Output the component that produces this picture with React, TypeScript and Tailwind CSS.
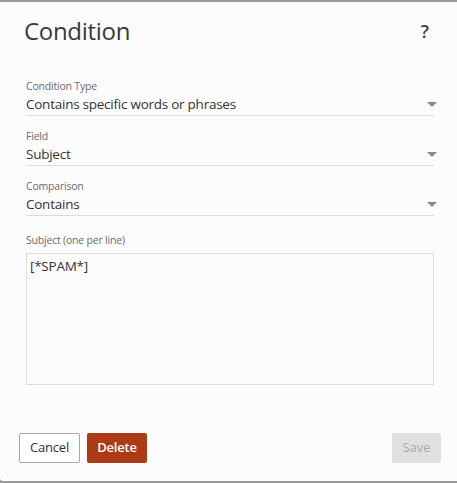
import React from 'react';

const font = { fontFamily: '"Open Sans", "Noto Sans", sans-serif' };

function Caret() {
  return (
    <svg width="10" height="5" viewBox="0 0 10 5" className="shrink-0">
      <path d="M0 0h10L5 5z" fill="#8a8a8a" />
    </svg>
  );
}

function SelectField({ label, value }: { label: string; value: string }) {
  return (
    <div className="flex flex-col">
      <span className="text-[10.5px] leading-[14px] text-[#6b6b6b] tracking-[-0.2px]">{label}</span>
      <div className="flex items-center justify-between h-[22px] border-b border-[#dcdcdc] pb-[1px] mt-[1px]">
        <span className="text-[13.5px] leading-[18px] text-[#333] tracking-[-0.25px]">{value}</span>
        <span className="mr-[-3px]"><Caret /></span>
      </div>
    </div>
  );
}

export default function App() {
  return (
    <div className="w-[457px] h-[483px] bg-[#9a9a9a] pt-[2px] pb-[2px] overflow-hidden" style={font}>
      <div className="h-full bg-[#fcfcfc] rounded-bl-[3px] flex flex-col">
        <div className="flex items-center justify-between pl-[24px] pr-[28px] pt-[14px]">
          <h2 className="text-[24px] leading-[30px] text-[#3a3a3a] tracking-[-0.3px]">Condition</h2>
          <span className="text-[18px] font-semibold text-[#444] leading-[24px]">?</span>
        </div>

        <div className="flex flex-col gap-[13px] pl-[26px] pr-[23px] mt-[33px]">
          <SelectField label="Condition Type" value="Contains specific words or phrases" />
          <SelectField label="Field" value="Subject" />
          <SelectField label="Comparison" value="Contains" />
        </div>

        <div className="flex flex-col pl-[26px] pr-[23px] mt-[17px]">
          <span className="text-[10.5px] leading-[14px] text-[#6b6b6b] tracking-[-0.2px]">Subject (one per line)</span>
          <textarea
            defaultValue="[*SPAM*]"
            className="mt-[6px] h-[132px] w-full resize-none border border-[#dcdcdc] bg-[#fcfcfc] px-[3px] py-[3px] text-[13.5px] leading-[18px] text-[#333] outline-none tracking-[-0.25px]"
            style={font}
          />
        </div>

        <div className="flex items-center justify-between pl-[19px] pr-[16px] mt-[48px]">
          <div className="flex gap-[7px]">
            <button className="h-[30px] w-[61px] rounded-[2px] border border-[#a8a8a8] bg-white text-[13px] text-[#333] tracking-[-0.2px]">Cancel</button>
            <button className="h-[30px] w-[60px] rounded-[2px] bg-[#ac3a16] text-[13px] font-semibold text-white tracking-[-0.2px]">Delete</button>
          </div>
          <button className="h-[30px] w-[49px] rounded-[2px] bg-[#e0e0e0] text-[13px] text-[#a8a8a8]">Save</button>
        </div>
      </div>
    </div>
  );
}
